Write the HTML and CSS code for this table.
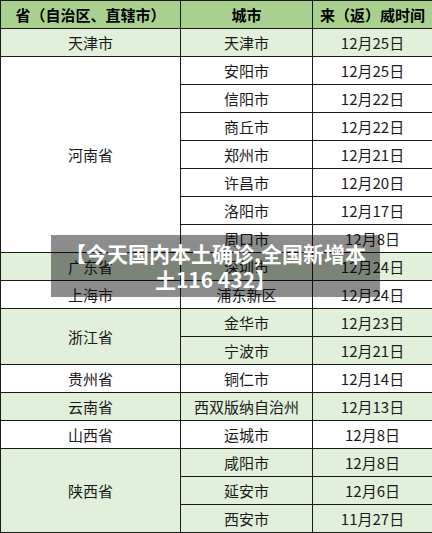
FILE: index.html
```html
<!DOCTYPE html>
<html lang="zh-CN">
<head>
<meta charset="utf-8">
<title>今天国内本土确诊</title>
<link rel="stylesheet" href="styles.css">
</head>
<body>
<div class="page">
  <table class="sheet">
    <colgroup><col class="c1"><col class="c2"><col class="c3"></colgroup>
    <thead>
      <tr class="head"><th>省（自治区、直辖市）</th><th>城市</th><th>来（返）威时间</th></tr>
    </thead>
    <tbody>
      <tr class="g"><td>天津市</td><td>天津市</td><td>12月25日</td></tr>
      <tr><td rowspan="7">河南省</td><td>安阳市</td><td>12月25日</td></tr>
      <tr><td>信阳市</td><td>12月22日</td></tr>
      <tr><td>商丘市</td><td>12月22日</td></tr>
      <tr><td>郑州市</td><td>12月21日</td></tr>
      <tr><td>许昌市</td><td>12月20日</td></tr>
      <tr><td>洛阳市</td><td>12月17日</td></tr>
      <tr><td>周口市</td><td>12月8日</td></tr>
      <tr class="g"><td>广东省</td><td>深圳市</td><td>12月24日</td></tr>
      <tr><td>上海市</td><td>浦东新区</td><td>12月24日</td></tr>
      <tr class="g"><td rowspan="2">浙江省</td><td>金华市</td><td>12月23日</td></tr>
      <tr class="g"><td>宁波市</td><td>12月21日</td></tr>
      <tr><td>贵州省</td><td>铜仁市</td><td>12月14日</td></tr>
      <tr class="g"><td>云南省</td><td>西双版纳自治州</td><td>12月13日</td></tr>
      <tr><td>山西省</td><td>运城市</td><td>12月8日</td></tr>
      <tr class="g"><td rowspan="3">陕西省</td><td>咸阳市</td><td>12月8日</td></tr>
      <tr class="g"><td>延安市</td><td>12月6日</td></tr>
      <tr class="g"><td>西安市</td><td>11月27日</td></tr>
    </tbody>
  </table>
  <div class="caption">【今天国内本土确诊,全国新增本<br>土116 432】</div>
</div>
</body>
</html>
```
FILE: styles.css
```css
html, body {
  margin: 0;
  padding: 0;
  background: #ffffff;
}
.page {
  position: relative;
  width: 432px;
  height: 533px;
  overflow: hidden;
  font-family: "Noto Sans CJK SC", "Noto Sans", sans-serif;
}
.sheet {
  border-collapse: collapse;
  table-layout: fixed;
  width: 432px;
  font-size: 15px;
  color: #1a1a1a;
}
.c1 { width: 180px; }
.c2 { width: 132px; }
.c3 { width: 120px; }
.sheet th, .sheet td {
  border: 1px solid #1a1a1a;
  height: 27px;
  padding: 0;
  line-height: 27px;
  text-align: center;
  white-space: nowrap;
  overflow: hidden;
}
.sheet td { font-weight: 400; }
.sheet th {
  font-weight: 700;
  color: #000;
  background: #a9d08e;
}
.sheet tr.g td { background: #e2efda; }
.caption {
  position: absolute;
  left: 51px;
  top: 235px;
  width: 329px;
  height: 62px;
  box-sizing: border-box;
  padding-top: 5px;
  background: rgba(0, 0, 0, 0.45);
  color: #ffffff;
  font-weight: 700;
  font-size: 21px;
  line-height: 26px;
  text-align: center;
}
```
